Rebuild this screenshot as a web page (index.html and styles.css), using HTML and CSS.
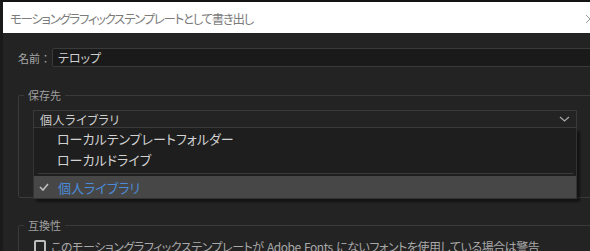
FILE: index.html
```html
<!DOCTYPE html>
<html lang="ja">
<head>
<meta charset="utf-8">
<link rel="stylesheet" href="styles.css">
</head>
<body>
<div class="window">
  <div class="titlebar">
    <span class="title">モーショングラフィックステンプレートとして書き出し</span>
    <svg class="close" width="10" height="10" viewBox="0 0 10 10"><path d="M1 1 L9 9 M9 1 L1 9" stroke="#999" stroke-width="1" fill="none"/></svg>
  </div>
  <div class="content">
    <div class="name-row">
      <label class="name-label">名前：</label>
      <div class="name-input">テロップ</div>
    </div>
    <fieldset class="group group-dest">
      <legend>保存先</legend>
      <div class="select-wrap">
        <div class="select">
          <span>個人ライブラリ</span>
          <svg class="chev" width="11" height="6" viewBox="0 0 11 6"><path d="M1 1 L5.5 5 L10 1" stroke="#a8a8a8" stroke-width="1.2" fill="none"/></svg>
        </div>
        <div class="menu">
          <div class="item">ローカルテンプレートフォルダー</div>
          <div class="item">ローカルドライブ</div>
          <div class="sep"></div>
          <div class="item selected">
            <svg class="check" width="10" height="8" viewBox="0 0 10 8"><path d="M1 4 L4 7 L9 1" stroke="#c0c0c0" stroke-width="1.6" fill="none"/></svg>
            <span>個人ライブラリ</span>
          </div>
        </div>
      </div>
    </fieldset>
    <fieldset class="group group-compat">
      <legend>互換性</legend>
      <div class="check-row">
        <span class="box"></span>
        <span class="check-text">このモーショングラフィックステンプレートが Adobe Fonts にないフォントを使用している場合は警告</span>
      </div>
    </fieldset>
  </div>
</div>
</body>
</html>
```
FILE: styles.css
```css
html, body {
  margin: 0;
  padding: 0;
  background: #232323;
  overflow: hidden;
}
body {
  font-family: "Noto Sans CJK JP", "Noto Sans", sans-serif;
  font-feature-settings: "palt";
  width: 590px;
  height: 251px;
}
.window {
  width: 620px;
  height: 260px;
  border-top: 2px solid #141414;
  border-left: 3px solid #1a1a1a;
  box-sizing: border-box;
  background: #232323;
}
.titlebar {
  height: 31px;
  background: #ffffff;
  border-top: 1px solid #fff;
  display: flex;
  align-items: center;
  justify-content: space-between;
  padding-left: 7px;
  box-sizing: border-box;
}
.title {
  font-size: 12.5px;
  color: #7c7c7c;
  letter-spacing: -1.3px;
}
.close {
  margin-right: 25px;
  margin-top: 2px;
}
.content {
  padding-left: 15px;
  padding-top: 15px;
}
.name-row {
  display: flex;
  align-items: center;
  height: 19px;
}
.name-label {
  font-size: 11px;
  color: #a8a8a8;
  width: 34px;
  font-feature-settings: normal;
}
.name-input {
  flex: 1;
  height: 19px;
  box-sizing: border-box;
  border: 1px solid #3a3a3a;
  border-radius: 2px;
  background: #1a1a1a;
  color: #cfcfcf;
  font-size: 12px;
  line-height: 17px;
  padding-left: 5px;
}
.group {
  margin: 0;
  padding: 0;
  border: 1px solid #3a3a3a;
  border-radius: 2px;
  min-width: 0;
}
.group legend {
  font-size: 11px;
  color: #a0a0a0;
  line-height: 14px;
  padding: 0 4px;
  margin-left: 5px;
}
.group-dest {
  margin-top: 21px;
  height: 110px;
  box-sizing: border-box;
}
.select-wrap {
  position: relative;
  margin-left: 14px;
  margin-top: 8px;
  width: 544px;
}
.select {
  height: 18px;
  box-sizing: border-box;
  border: 1px solid #393939;
  background: #232323;
  display: flex;
  align-items: center;
  justify-content: space-between;
  padding: 0 4px 0 6px;
  font-size: 12px;
  color: #cfcfcf;
  letter-spacing: 0.6px;
}
.chev {
  margin-right: 2px;
}
.menu {
  position: absolute;
  top: 18px;
  left: 0;
  width: 544px;
  box-sizing: border-box;
  background: #1e1e1e;
  border: 1px solid #333;
  border-top: none;
  box-shadow: 3px 3px 2px rgba(0,0,0,0.45);
}
.item {
  height: 21px;
  display: flex;
  align-items: center;
  padding-left: 23px;
  font-size: 13px;
  color: #d2d2d2;
}
.sep {
  height: 1px;
  background: #3c3c3c;
  margin: 3px 3px 2px 4px;
}
.item.selected {
  background: #474747;
  height: 22px;
  padding-left: 5px;
  color: #4b8bd9;
}
.check {
  margin-right: 9px;
}
.group-compat {
  margin-top: 20px;
  height: 60px;
}
.check-row {
  display: flex;
  align-items: center;
  margin-left: 15px;
  margin-top: 6px;
}
.box {
  width: 12px;
  height: 14px;
  box-sizing: border-box;
  border: 2px solid #bdbdbd;
  border-radius: 2px;
  margin-right: 5px;
}
.check-text {
  font-size: 12px;
  color: #a8a8a8;
  letter-spacing: -0.45px;
  word-spacing: 1px;
}
```
